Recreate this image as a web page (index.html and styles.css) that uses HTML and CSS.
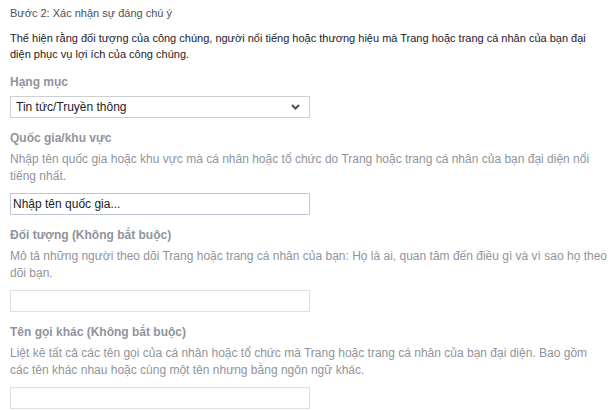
FILE: index.html
```html
<!DOCTYPE html>
<html lang="vi">
<head>
<meta charset="utf-8">
<link rel="stylesheet" href="styles.css">
</head>
<body>
<div class="page">
  <div class="step">Bước 2: Xác nhận sự đáng chú ý</div>
  <p class="intro">Thể hiện rằng đối tượng của công chúng, người nổi tiếng hoặc thương hiệu mà Trang hoặc trang cá nhân của bạn đại diện&nbsp;phục vụ lợi ích của công chúng.</p>

  <div class="field">
    <div class="label">Hạng mục</div>
    <div class="select">
      <span class="select-text">Tin tức/Truyền thông</span>
      <svg class="chev" width="9" height="6" viewBox="0 0 9 6"><path d="M1 1 L4.5 4.5 L8 1" fill="none" stroke="#4b4f56" stroke-width="2"/></svg>
    </div>
  </div>

  <div class="field">
    <div class="label">Quốc gia/khu vực</div>
    <div class="help">Nhập tên quốc gia hoặc khu vực mà cá nhân hoặc tổ chức do Trang hoặc trang cá nhân của bạn đại diện nổi tiếng&nbsp;nhất.</div>
    <div class="input input-active">Nhập tên quốc gia...</div>
  </div>

  <div class="field">
    <div class="label">Đối tượng (Không bắt buộc)</div>
    <div class="help">Mô tả những người theo dõi Trang hoặc trang cá nhân của bạn: Họ là ai, quan tâm đến điều gì và vì sao họ theo dõi bạn.</div>
    <div class="input"></div>
  </div>

  <div class="field">
    <div class="label">Tên gọi khác (Không bắt buộc)</div>
    <div class="help">Liệt kê tất cả các tên gọi của cá nhân hoặc tổ chức mà Trang hoặc trang cá nhân của bạn đại diện. Bao gồm các&nbsp;tên khác nhau hoặc cùng một tên nhưng bằng ngôn ngữ khác.</div>
    <div class="input"></div>
  </div>
</div>
</body>
</html>
```
FILE: styles.css
```css
html, body {
  margin: 0;
  padding: 0;
  background: #ffffff;
}
body {
  font-family: "Liberation Sans", Arial, sans-serif;
}
.page {
  padding: 5px 0 0 10px;
}
.step {
  font-size: 11px;
  line-height: 16px;
  color: #4b4f56;
}
.intro {
  margin: 9px 0 12px 0;
  font-size: 11px;
  line-height: 16px;
  color: #1d2129;
}
.field {
  margin-bottom: 12px;
}
.label {
  font-size: 12px;
  font-weight: bold;
  line-height: 16px;
  color: #90949c;
  margin-bottom: 6px;
}
.help {
  font-size: 12px;
  line-height: 17px;
  color: #90949c;
  margin-top: -1px;
  margin-bottom: 8px;
}
.select {
  box-sizing: border-box;
  width: 300px;
  height: 22px;
  border: 1px solid #ccd0d5;
  display: flex;
  align-items: center;
  justify-content: space-between;
  padding: 0 9px 0 5px;
  font-size: 12px;
  color: #1d2129;
}
.chev {
  display: block;
}
.input {
  box-sizing: border-box;
  width: 300px;
  height: 22px;
  border: 1px solid #dddfe2;
  padding: 0 2px;
  font-size: 12px;
  line-height: 20px;
  color: #1d2129;
}
.input-active {
  border-color: #bdc7d8;
}
```
